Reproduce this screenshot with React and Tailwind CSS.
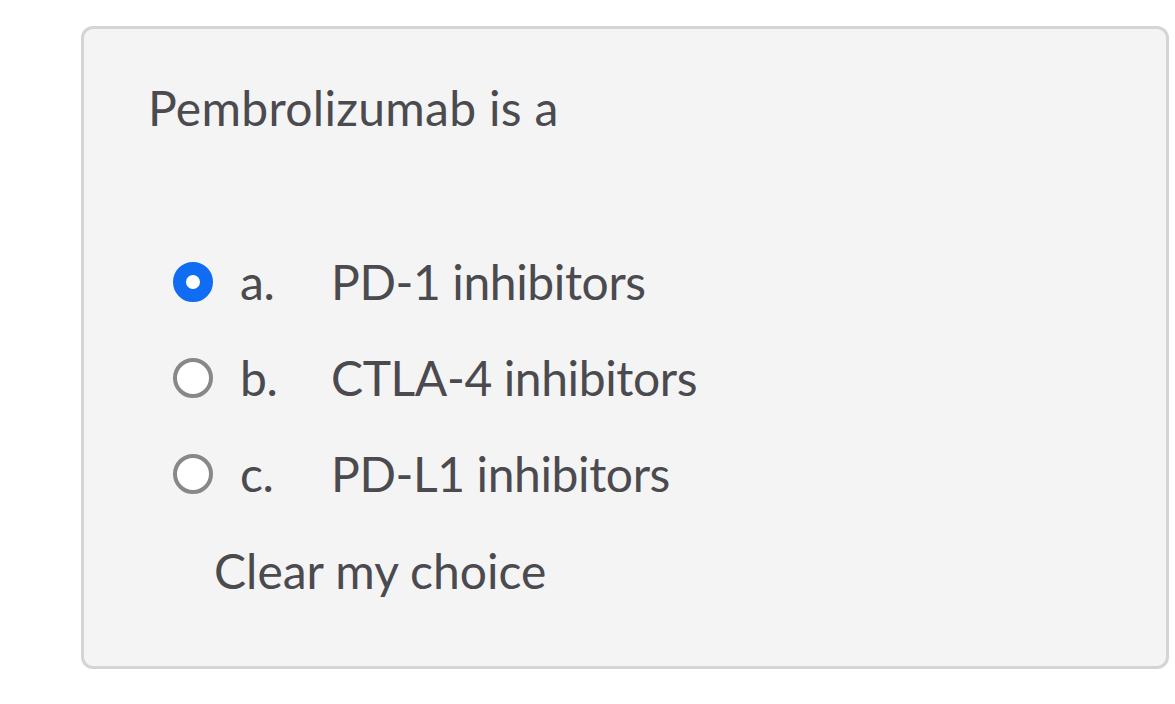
export default function App() {
  const opts = [
    { l: "a.", t: "PD-1 inhibitors", sel: true },
    { l: "b.", t: "CTLA-4 inhibitors", sel: false },
    { l: "c.", t: "PD-L1 inhibitors", sel: false },
  ];
  return (
    <div className="w-[1175px] h-[704px] bg-white pt-[26px] pl-[81px]" style={{ fontFamily: "Lato, 'Noto Sans', sans-serif" }}>
      <div className="w-[1088px] h-[643px] bg-[#f4f4f4] border-[3px] border-[#d4d4d4] rounded-[12px] pl-[64px] pt-[47px] text-[#4a4a4f]">
        <div className="text-[48px] leading-[64px] tracking-[0.3px]">Pembrolizumab is a</div>
        <div className="mt-[110px] pl-[25px] flex flex-col gap-[32px]">
          {opts.map((o) => (
            <div key={o.l} className="flex items-center h-[64px] text-[48px] tracking-[-0.4px]">
              {o.sel ? (
                <span className="w-[40px] h-[40px] rounded-full border-[13px] border-[#0f6cf3] bg-white shrink-0" />
              ) : (
                <span className="w-[40px] h-[40px] rounded-full border-[4px] border-[#888888] bg-white shrink-0" />
              )}
              <span className="ml-[27px] w-[91px]">{o.l}</span>
              <span>{o.t}</span>
            </div>
          ))}
        </div>
        <div className="mt-[33px] pl-[66px] text-[48px] leading-[64px]">Clear my choice</div>
      </div>
    </div>
  );
}
